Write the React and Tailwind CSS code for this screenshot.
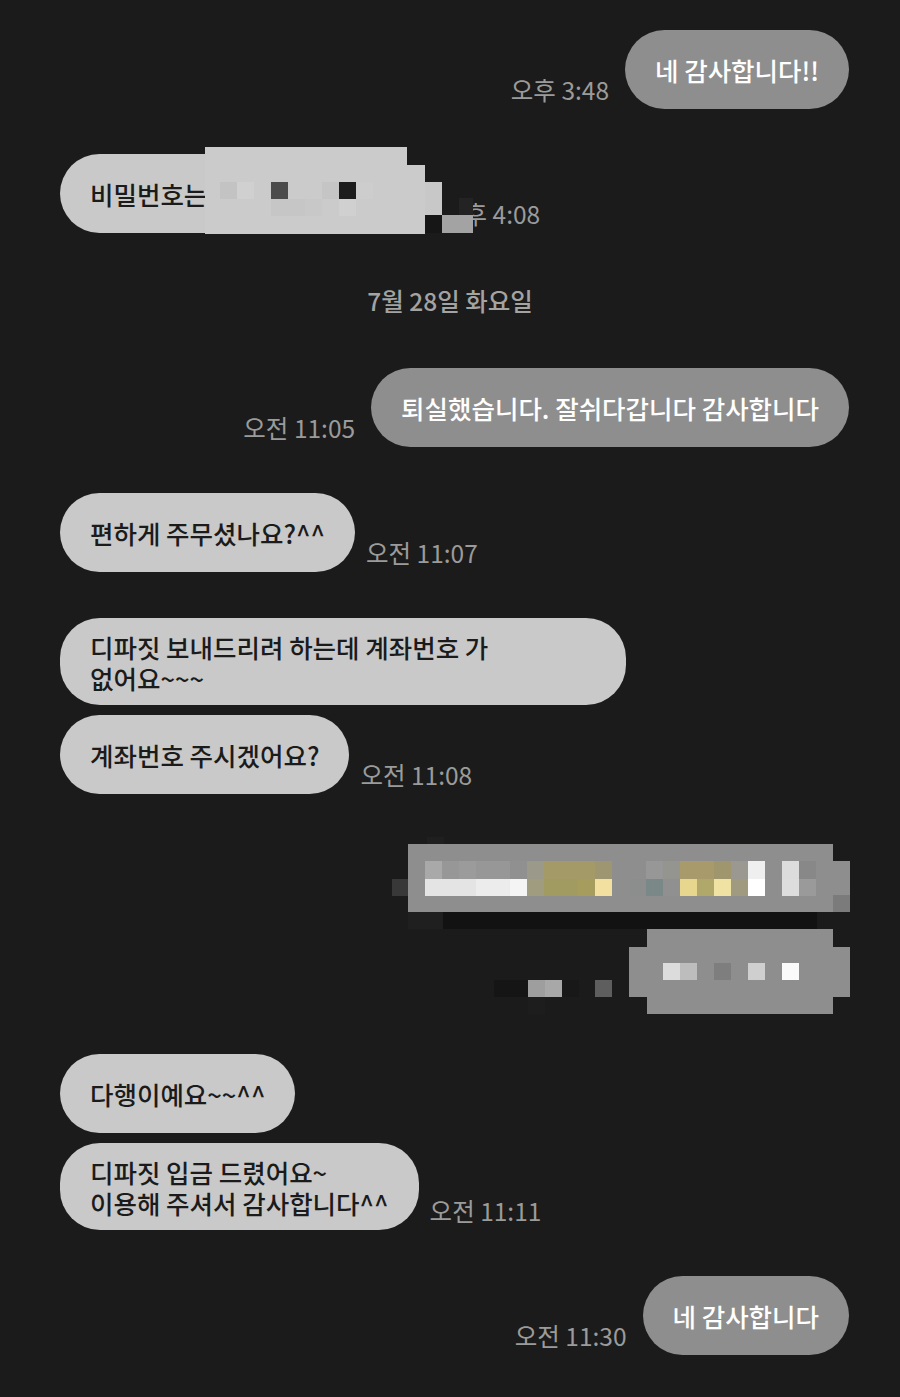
import React from 'react';

const FONT = { fontFamily: '"Noto Sans CJK KR", "Noto Sans", sans-serif' };

function Bubble({ sent, className = '', children }) {
  return (
    <div
      className={`flex min-h-[79px] shrink-0 items-center rounded-[40px] px-[30px] py-[12.5px] text-[25.5px] font-medium leading-[31px] ${
        sent ? 'bg-[#8e8e8e] text-white' : 'bg-[#c9c9c9] text-[#1b1b1b]'
      } ${className}`}
    >
      <p className="whitespace-nowrap">{children}</p>
    </div>
  );
}

function Time({ className = '', children }) {
  return (
    <span
      className={`shrink-0 whitespace-nowrap pb-[5px] text-[24.5px] leading-[28px] text-[#9b9b9b] ${className}`}
    >
      {children}
    </span>
  );
}

function Sent({ time, children, className = '' }) {
  return (
    <div className={`flex items-end justify-end gap-4 pr-[51px] ${className}`}>
      {time && <Time>{time}</Time>}
      <Bubble sent>{children}</Bubble>
    </div>
  );
}

function Received({ time, children, className = '', bubbleClass = '', timeClass = '' }) {
  return (
    <div className={`flex items-end gap-[11px] pl-[60px] ${className}`}>
      <Bubble className={bubbleClass}>{children}</Bubble>
      {time && <Time className={timeClass}>{time}</Time>}
    </div>
  );
}

// censor blocks, [x, y, w, h, fill]
const MOSAIC_A = [
  [0, 0, 202, 87, '#cbcbcb'],
  [202, 18, 18, 69, '#cbcbcb'],
  [220, 35, 17, 33, '#c8c8c8'],
  [220, 68, 17, 18, '#161616'],
  [237, 68, 31, 18, '#a3a3a3'],
  [237, 51, 31, 17, '#1b1b1b'],
  [254, 51, 14, 17, '#232323'],
  [15, 35, 17, 17, '#c3c3c3'],
  [32, 35, 17, 17, '#d0d0d0'],
  [66, 35, 17, 17, '#4b4b4b'],
  [117, 35, 17, 17, '#c5c5c5'],
  [134, 35, 17, 17, '#1c1c1c'],
  [151, 35, 17, 17, '#cdcdcd'],
  [66, 52, 34, 17, '#c6c6c6'],
  [100, 52, 17, 17, '#c8c8c8'],
  [134, 52, 17, 17, '#d0d0d0'],
];

const MOSAIC_B = [
  [35, 8, 17, 17, '#1f1f1f'],
  [16, 15, 425, 68, '#8e8e8e'],
  [441, 32, 17, 34, '#8e8e8e'],
  [441, 66, 17, 17, '#7b7b7b'],
  [0, 50, 16, 17, '#383838'],
  [16, 83, 35, 17, '#1f1f1f'],
  [51, 83, 374, 17, '#121212'],
  // row 1
  [33, 32, 17, 18, '#a9a9a9'],
  [50, 32, 17, 18, '#979797'],
  [67, 32, 17, 18, '#9b9b9b'],
  [84, 32, 34, 18, '#979797'],
  [118, 32, 17, 18, '#909090'],
  [135, 32, 17, 18, '#9b9a8a'],
  [152, 32, 51, 18, '#a39a68'],
  [203, 32, 17, 18, '#9e9670'],
  [254, 32, 17, 18, '#979797'],
  [271, 32, 17, 18, '#95958f'],
  [288, 32, 34, 18, '#a89a6a'],
  [322, 32, 17, 18, '#a0966e'],
  [339, 32, 17, 18, '#9a9890'],
  [356, 32, 17, 18, '#efefef'],
  [390, 32, 17, 18, '#dcdcdc'],
  [407, 32, 17, 18, '#888888'],
  // row 2
  [33, 50, 51, 17, '#e4e4e4'],
  [84, 50, 34, 17, '#ececec'],
  [118, 50, 17, 17, '#f4f4f4'],
  [135, 50, 17, 17, '#a09c80'],
  [152, 50, 34, 17, '#a19b62'],
  [186, 50, 17, 17, '#a69c5e'],
  [203, 50, 17, 17, '#f1e0a0'],
  [237, 50, 17, 17, '#8c8e8e'],
  [254, 50, 17, 17, '#7a8888'],
  [271, 50, 17, 17, '#909090'],
  [288, 50, 17, 17, '#e6d68e'],
  [305, 50, 17, 17, '#b0a86a'],
  [322, 50, 17, 17, '#f0e2a2'],
  [339, 50, 17, 17, '#a09a80'],
  [356, 50, 17, 17, '#ffffff'],
  [390, 50, 17, 17, '#dddddd'],
  [407, 50, 17, 17, '#9a9a9a'],
  // second block
  [255, 100, 186, 85, '#8e8e8e'],
  [237, 118, 221, 50, '#8e8e8e'],
  [271, 134, 17, 17, '#dcdcdc'],
  [288, 134, 17, 17, '#bdbdbd'],
  [322, 134, 17, 17, '#7e7e7e'],
  [356, 134, 17, 17, '#cfcfcf'],
  [390, 134, 17, 17, '#fafafa'],
  [102, 151, 34, 17, '#151515'],
  [136, 151, 17, 17, '#9e9e9e'],
  [153, 151, 17, 17, '#a8a8a8'],
  [170, 151, 17, 17, '#181818'],
  [203, 151, 17, 17, '#5e5e5e'],
  [136, 168, 17, 17, '#1d1d1d'],
];

function Mosaic({ blocks, width, height, className = '' }) {
  return (
    <svg width={width} height={height} viewBox={`0 0 ${width} ${height}`} className={className}>
      {blocks.map(([x, y, w, h, fill], i) => (
        <rect key={i} x={x} y={y} width={w} height={h} fill={fill} />
      ))}
    </svg>
  );
}

export default function App() {
  return (
    <div style={FONT} className="flex min-h-[1397px] w-[900px] flex-col bg-[#1b1b1b] pb-10 pt-[30px]">
      <Sent time="오후 3:48">네 감사합니다!!</Sent>

      {/* password row, covered by a mosaic */}
      <div className="relative mt-[45px]">
        <Received time="오후 4:08" bubbleClass="w-[359px]" timeClass="ml-[12px]">
          비밀번호는
        </Received>
        <Mosaic blocks={MOSAIC_A} width={268} height={88} className="absolute left-[205px] top-[-7px]" />
      </div>

      <p className="mt-[54px] text-center text-[24.5px] font-medium leading-[28px] text-[#a3a3a3]">
        7월 28일 화요일
      </p>

      <Sent time="오전 11:05" className="mt-[53px]">
        퇴실했습니다. 잘쉬다갑니다 감사합니다
      </Sent>

      <Received time="오전 11:07" className="mt-[46px]">
        편하게 주무셨나요?^^
      </Received>
      <Received className="mt-[46px]" bubbleClass="w-[566px]">
        디파짓 보내드리려 하는데 계좌번호 가
        <br />
        없어요~~~
      </Received>
      <Received time="오전 11:08" className="mt-[10px]">
        계좌번호 주시겠어요?
      </Received>

      <div className="mt-[35px] flex justify-end pr-[50px]">
        <Mosaic blocks={MOSAIC_B} width={458} height={185} />
      </div>

      <Received className="mt-10">다행이예요~~^^</Received>
      <Received time="오전 11:11" className="mt-[10px]">
        디파짓 입금 드렸어요~
        <br />
        이용해 주셔서 감사합니다^^
      </Received>

      <Sent time="오전 11:30" className="mt-[46px]">
        네 감사합니다
      </Sent>
    </div>
  );
}
